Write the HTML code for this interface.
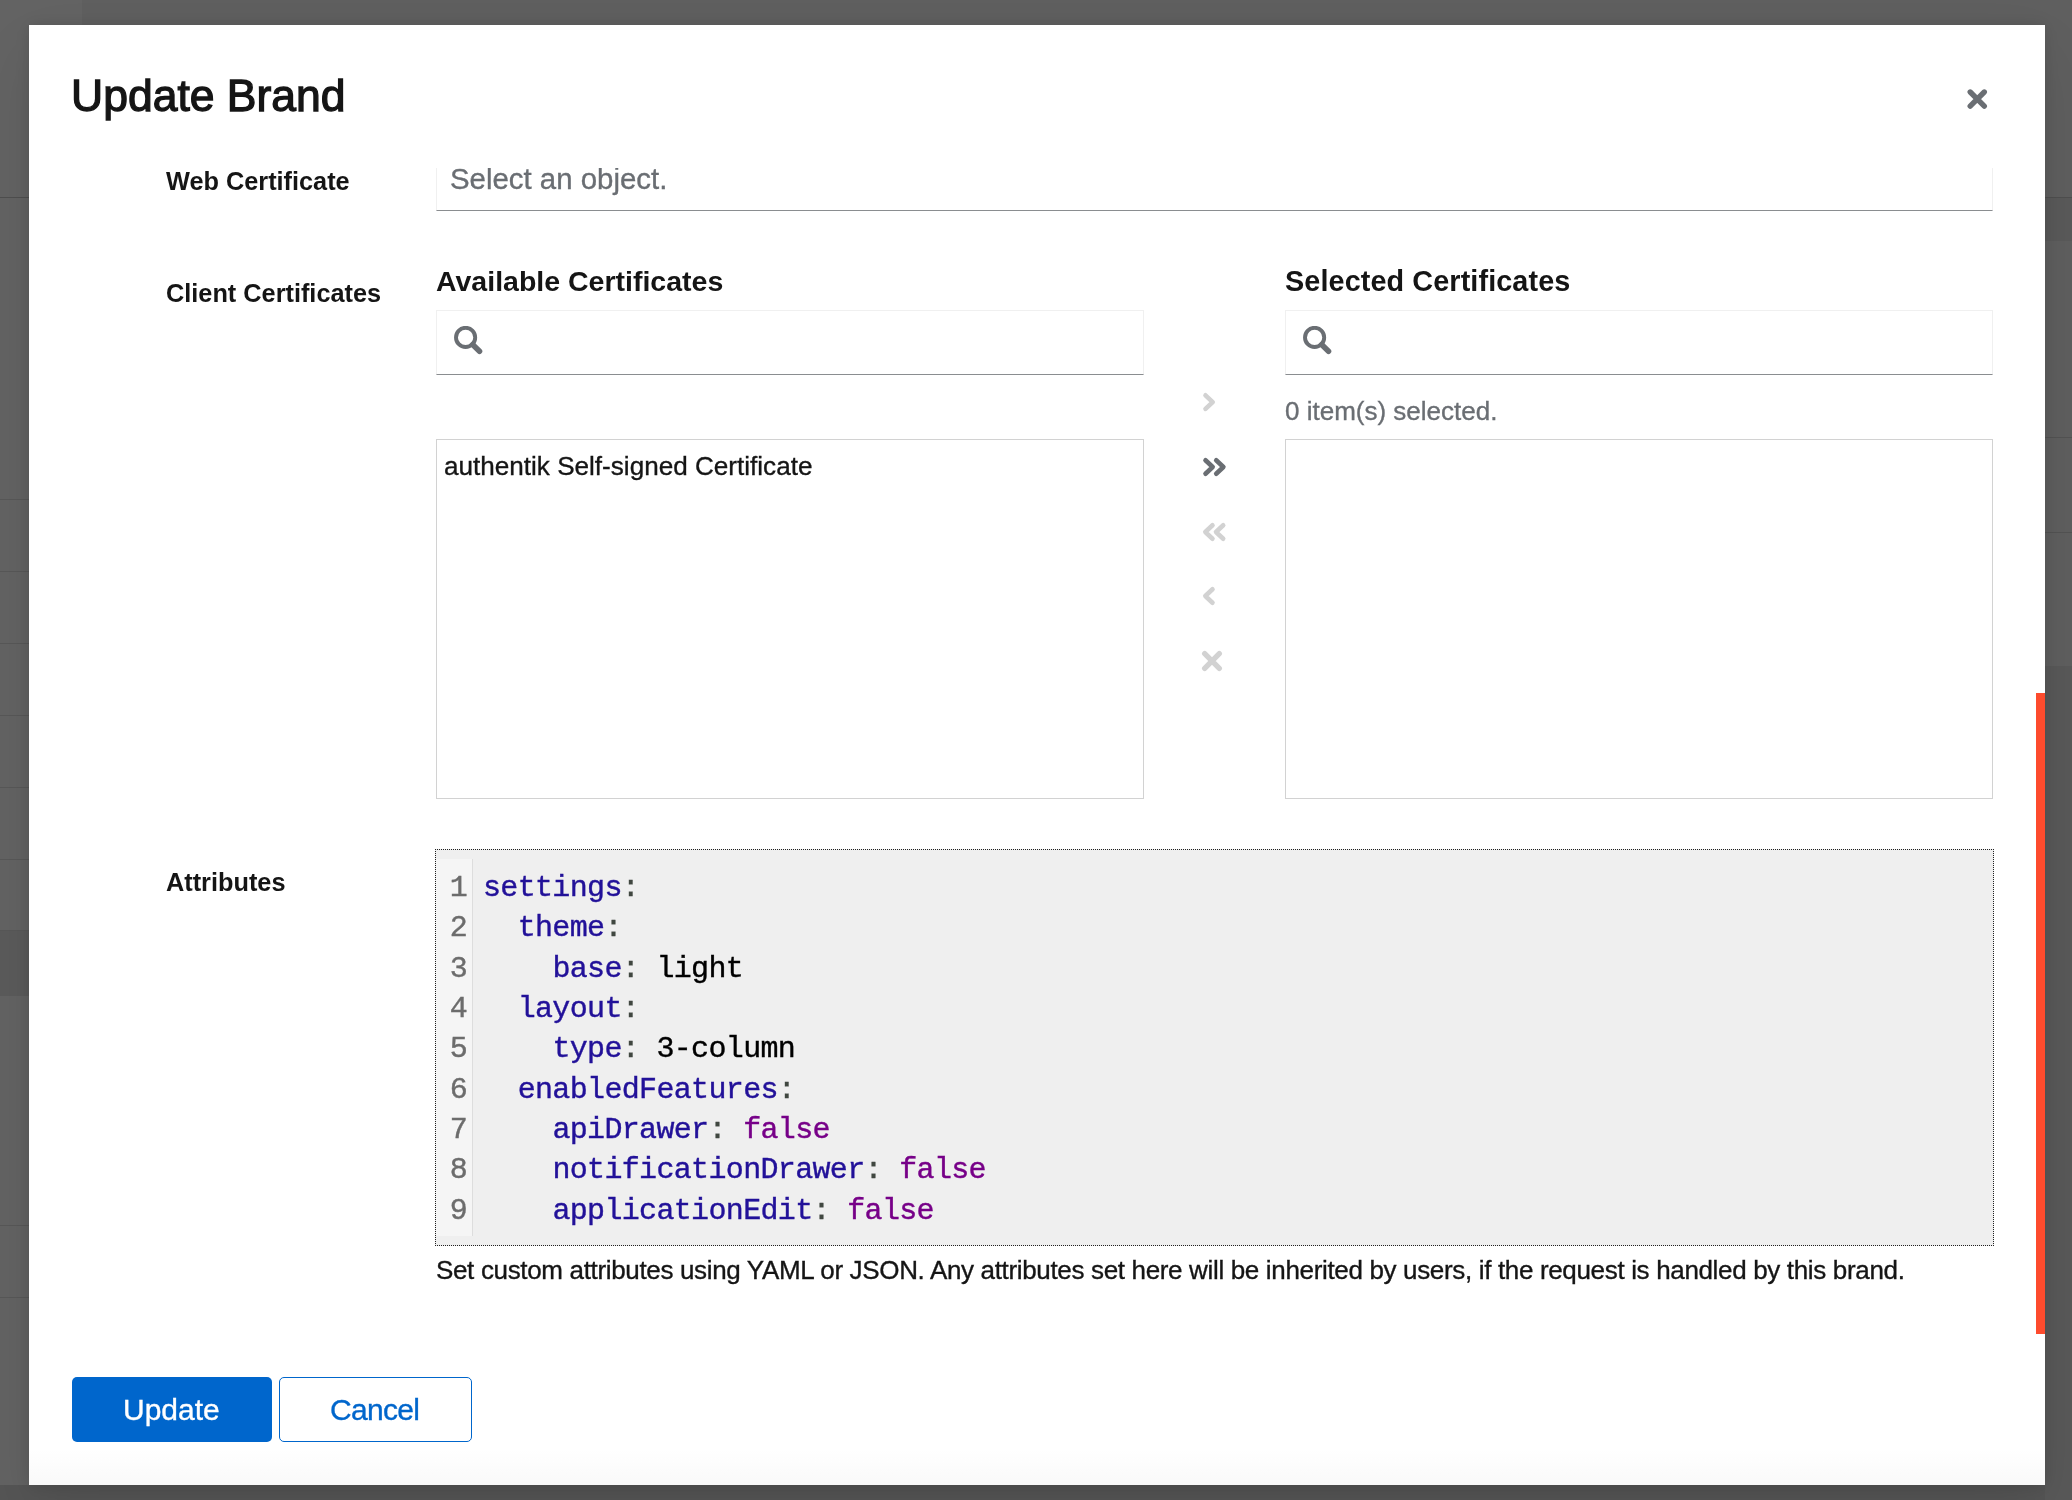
<!DOCTYPE html>
<html><head><meta charset="utf-8">
<style>
html,body{margin:0;padding:0;width:2072px;height:1500px;overflow:hidden;background:#5f5f5f;}
body{position:relative;font-family:"Liberation Sans",sans-serif;}
.a{position:absolute;}
.t{position:absolute;white-space:pre;line-height:1;}
.rt{-webkit-text-stroke:0.35px;}
.bgl{position:absolute;height:1px;background:#535353;}
#modal{position:absolute;left:29px;top:25px;width:2016px;height:1460px;background:#fff;box-shadow:0 29px 58px 0 rgba(0,0,0,.09),0 0 16px 0 rgba(0,0,0,.12);overflow:hidden;}
.lbl{font-weight:bold;font-size:25.3px;color:#151515;}
.inp{position:absolute;box-sizing:border-box;border:1px solid #f0f0f0;border-bottom:1px solid #8a8d90;background:#fff;}
.list{position:absolute;box-sizing:border-box;border:1px solid #d2d2d2;background:#fff;}
.code{font-family:"Liberation Mono",monospace;font-size:30px;letter-spacing:-0.66px;-webkit-text-stroke:0.4px;}
.k{color:#221199}.p{color:#404740}.v{color:#000}.b{color:#770088}
</style></head><body>
<!-- background page strips -->
<div class="a" style="left:0;top:0;width:82px;height:1500px;background:#636363"></div>
<div class="bgl" style="left:0;top:197px;width:2072px;background:#4f4f4f"></div>
<div class="bgl" style="left:0;top:499px;width:82px;background:#585858"></div>
<div class="bgl" style="left:0;top:571px;width:82px;background:#585858"></div>
<div class="bgl" style="left:0;top:643px;width:82px;background:#585858"></div>
<div class="bgl" style="left:0;top:715px;width:82px;background:#585858"></div>
<div class="bgl" style="left:0;top:787px;width:82px;background:#585858"></div>
<div class="bgl" style="left:0;top:859px;width:82px;background:#585858"></div>
<div class="bgl" style="left:0;top:930px;width:82px;background:#585858"></div>
<div class="a" style="left:0;top:931px;width:82px;height:65px;background:#5b5b5b"></div>
<div class="bgl" style="left:0;top:1225px;width:82px;background:#585858"></div>
<div class="bgl" style="left:0;top:1297px;width:82px;background:#585858"></div>
<div class="a" style="left:2045px;top:198px;width:27px;height:43px;background:#5a5a5a"></div>
<div class="a" style="left:0;top:1485px;width:2072px;height:15px;background:#555"></div>
<div class="bgl" style="left:2045px;top:437px;width:27px"></div>
<div class="bgl" style="left:2045px;top:532px;width:27px"></div>
<div class="a" style="left:2045px;top:666px;width:27px;height:834px;background:#595959"></div>

<div id="modal" style="will-change:transform">
  <!-- coordinates inside modal are page coords minus (29,25) -->
  <div class="t" id="title" style="left:42px;top:49px;font-size:44.5px;-webkit-text-stroke:1.3px #151515;color:#151515;">Update Brand</div>

  <!-- scrolling body -->
  <div class="a" id="body" style="left:0;top:143px;width:2016px;height:1166px;overflow:hidden;">
    <!-- inside body: page y minus 168 -->
    <div class="t lbl" style="left:137px;top:1px;">Web Certificate</div>
    <div class="inp" style="left:407px;top:-30px;width:1557px;height:73px;"></div>
    <div class="t rt" style="left:421px;top:-4px;font-size:29.4px;color:#6a6e73;">Select an object.</div>

    <div class="t lbl" style="left:137px;top:113px;">Client Certificates</div>
    <div class="t" style="left:407px;top:99px;font-size:28.5px;font-weight:bold;color:#151515;">Available Certificates</div>
    <div class="t" style="left:1256px;top:99px;font-size:28.8px;letter-spacing:0.1px;font-weight:bold;color:#151515;">Selected Certificates</div>
    <div class="inp" style="left:407px;top:142px;width:708px;height:65px;"></div>
    <div class="inp" style="left:1256px;top:142px;width:708px;height:65px;"></div>
    <svg class="a" style="left:425px;top:158px" width="29" height="29" viewBox="0 0 29 29"><circle cx="11.6" cy="11.4" r="9.6" fill="none" stroke="#6a6e73" stroke-width="3.9"/><line x1="18.6" y1="18.6" x2="25.5" y2="25.3" stroke="#6a6e73" stroke-width="5.6" stroke-linecap="round"/></svg>
    <svg class="a" style="left:1274px;top:158px" width="29" height="29" viewBox="0 0 29 29"><circle cx="11.6" cy="11.4" r="9.6" fill="none" stroke="#6a6e73" stroke-width="3.9"/><line x1="18.6" y1="18.6" x2="25.5" y2="25.3" stroke="#6a6e73" stroke-width="5.6" stroke-linecap="round"/></svg>
    <div class="t rt" style="left:1256px;top:230px;font-size:26px;color:#6a6e73;">0 item(s) selected.</div>
    <div class="list" style="left:407px;top:271px;width:708px;height:360px;"></div>
    <div class="list" style="left:1256px;top:271px;width:708px;height:360px;"></div>
    <div class="t rt" style="left:415px;top:285px;font-size:26.1px;color:#151515;">authentik Self-signed Certificate</div>


    <!-- attributes -->
    <div class="t lbl" style="left:137px;top:702px;">Attributes</div>
    <div class="a" style="left:406px;top:681px;width:1559px;height:397px;box-sizing:border-box;border:1px dotted #212121;background:#efefef;">
      <div class="a" style="left:0;top:9px;width:36px;height:377px;background:#f5f5f5;border-right:1px solid #dddddd;"></div>
      <div class="a code" style="left:0;top:18px;width:36px;text-align:right;color:#6c6c6c;line-height:40.32px;">
        <div style="padding-right:5px">1</div><div style="padding-right:5px">2</div><div style="padding-right:5px">3</div><div style="padding-right:5px">4</div><div style="padding-right:5px">5</div><div style="padding-right:5px">6</div><div style="padding-right:5px">7</div><div style="padding-right:5px">8</div><div style="padding-right:5px">9</div>
      </div>
      <div class="a code" style="left:47px;top:18px;white-space:pre;line-height:40.32px;color:#000"><div><span class="k">settings</span><span class="p">:</span></div><div>  <span class="k">theme</span><span class="p">:</span></div><div>    <span class="k">base</span><span class="p">:</span> <span class="v">light</span></div><div>  <span class="k">layout</span><span class="p">:</span></div><div>    <span class="k">type</span><span class="p">:</span> <span class="v">3-column</span></div><div>  <span class="k">enabledFeatures</span><span class="p">:</span></div><div>    <span class="k">apiDrawer</span><span class="p">:</span> <span class="b">false</span></div><div>    <span class="k">notificationDrawer</span><span class="p">:</span> <span class="b">false</span></div><div>    <span class="k">applicationEdit</span><span class="p">:</span> <span class="b">false</span></div></div>
    </div>
    <div class="t rt" style="left:407px;top:1089px;font-size:26px;letter-spacing:-0.34px;color:#151515;">Set custom attributes using YAML or JSON. Any attributes set here will be inherited by users, if the request is handled by this brand.</div>
  </div>
  <!-- scrollbar thumb -->
  <div class="a" style="left:2007px;top:668px;width:9px;height:641px;background:#fd4b2d;"></div>

  <!-- footer -->
  <div class="a" style="left:0;top:1425px;width:2016px;height:35px;background:linear-gradient(#fff,#f9f9f9);"></div>
  <div class="a" style="left:43px;top:1352px;width:200px;height:65px;box-sizing:border-box;background:#0066cc;border-radius:5px;"></div>
  <div class="t rt" style="left:94px;top:1370px;font-size:30px;color:#fff;">Update</div>
  <div class="a" style="left:250px;top:1352px;width:193px;height:65px;box-sizing:border-box;border:1.5px solid #0066cc;border-radius:5px;background:#fff"></div>
  <div class="t rt" style="left:301px;top:1370px;font-size:30px;letter-spacing:-0.7px;color:#0066cc;">Cancel</div>
</div>
<svg class="a" style="left:0;top:0;pointer-events:none" width="2072" height="1500" viewBox="0 0 2072 1500" fill="none" stroke-linecap="round" stroke-linejoin="round">
  <g stroke="#6a6e73" stroke-width="5.4"><path d="M1970.2 92L1984.3 106.2M1984.3 92L1970.2 106.2"/></g>
  <g stroke="#d2d2d2" stroke-width="4.6"><path d="M1205.5 395.3L1212.7 402.1L1205.5 408.9"/></g>
  <g stroke="#6a6e73" stroke-width="4.6"><path d="M1205.5 460.3L1212.7 467L1205.5 473.7M1216.2 460.3L1223.4 467L1216.2 473.7"/></g>
  <g stroke="#d2d2d2" stroke-width="4.6"><path d="M1212.5 525.3L1205.3 532L1212.5 538.7M1223.2 525.3L1216 532L1223.2 538.7"/></g>
  <g stroke="#d2d2d2" stroke-width="4.6"><path d="M1212.5 589.3L1205.3 596L1212.5 602.7"/></g>
  <g stroke="#d2d2d2" stroke-width="5.4"><path d="M1204.7 653.7L1219.3 668.3M1219.3 653.7L1204.7 668.3"/></g>
</svg>
</body></html>
